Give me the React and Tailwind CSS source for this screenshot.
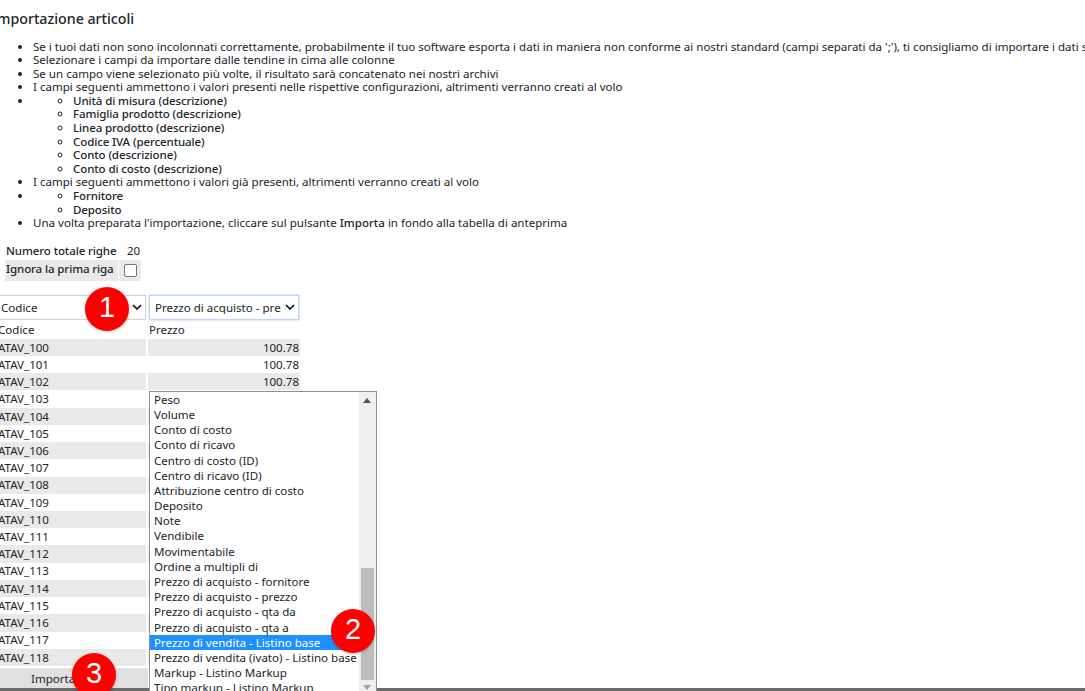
import React from "react";

const rows = ["100","101","102","103","104","105","106","107","108","109","110","111","112","113","114","115","116","117","118"];

const options = [
    "Peso", "Volume", "Conto di costo", "Conto di ricavo", "Centro di costo (ID)", "Centro di ricavo (ID)",
    "Attribuzione centro di costo", "Deposito", "Note", "Vendibile", "Movimentabile", "Ordine a multipli di",
    "Prezzo di acquisto - fornitore", "Prezzo di acquisto - prezzo", "Prezzo di acquisto - qta da", "Prezzo di acquisto - qta a",
    "Prezzo di vendita - Listino base", "Prezzo di vendita (ivato) - Listino base", "Markup - Listino Markup", "Tipo markup - Listino Markup",
];

function Badge({ n, className }) {
    return (
        <div className={"absolute w-[44px] h-[44px] pb-[3px] rounded-full bg-[#fe0000] text-white shadow-[0_1px_3px_rgba(0,0,0,0.25)] flex items-center justify-center text-[29px] font-['Liberation_Sans',sans-serif] " + className}>
            {n}
        </div>
    );
}

function Chevron() {
    return (
        <svg width="10" height="6" viewBox="0 0 10 6" className="shrink-0">
            <path d="M1 1l4 4 4-4" fill="none" stroke="#111" strokeWidth="1.7" />
        </svg>
    );
}

function App() {
    return (
        <div className="relative w-[1085px] h-[691px] overflow-hidden bg-white text-[#212529] text-[11.55px] leading-[13.6px] font-['Noto_Sans',sans-serif]">
            <div className="-ml-[9px] w-[1400px]">
                <h2 className="pt-[11px] pl-[1px] text-[14.2px] leading-[16px] font-medium h-[39.5px]">Importazione articoli</h2>
                <ul className="list-disc pl-[42px]">
                    <li>Se i tuoi dati non sono incolonnati correttamente, probabilmente il tuo software esporta i dati in maniera non conforme ai nostri standard (campi separati da ';'), ti consigliamo di importare i dati secondo lo standard</li>
                    <li>Selezionare i campi da importare dalle tendine in cima alle colonne</li>
                    <li>Se un campo viene selezionato più volte, il risultato sarà concatenato nei nostri archivi</li>
                    <li>I campi seguenti ammettono i valori presenti nelle rispettive configurazioni, altrimenti verranno creati al volo</li>
                    <li>
                        <ul className="list-[circle] pl-[40px] font-medium tracking-[-0.12px]">
                            <li>Unità di misura (descrizione)</li>
                            <li>Famiglia prodotto (descrizione)</li>
                            <li>Linea prodotto (descrizione)</li>
                            <li>Codice IVA (percentuale)</li>
                            <li>Conto (descrizione)</li>
                            <li>Conto di costo (descrizione)</li>
                        </ul>
                    </li>
                    <li>I campi seguenti ammettono i valori già presenti, altrimenti verranno creati al volo</li>
                    <li>
                        <ul className="list-[circle] pl-[40px] font-medium tracking-[-0.12px]">
                            <li>Fornitore</li>
                            <li>Deposito</li>
                        </ul>
                    </li>
                    <li>Una volta preparata l'importazione, cliccare sul pulsante <span className="font-medium">Importa</span> in fondo alla tabella di anteprima</li>
                </ul>

                <div className="mt-[12px] ml-[14px] flex h-[18px] items-center whitespace-nowrap">
                    <span className="w-[117px] pl-[1px] font-medium tracking-[-0.12px]">Numero totale righe</span>
                    <span className="pl-[5px]">20</span>
                </div>
                <div className="ml-[14px] flex gap-[1px] h-[21px] whitespace-nowrap">
                    <span className="w-[113px] bg-[#e9e9e9] pl-[1px] pt-[2px] font-medium tracking-[-0.12px]">Ignora la prima riga</span>
                    <span className="w-[22px] bg-[#e9e9e9] flex items-center justify-center">
                        <input type="checkbox" className="w-[13px] h-[13px] appearance-none bg-white border border-[#767676] rounded-[2px]" />
                    </span>
                </div>

                <div className="mt-[14px] flex gap-[3px] h-[25px]">
                    <div className="w-[155px] h-[25px] bg-white border border-[#d0d0d0] flex items-center justify-between pl-[9px] pr-[3px]">
                        <span>Codice</span>
                        <Chevron />
                    </div>
                    <div className="w-[150px] h-[25px] bg-white border border-[#bcd3f5] shadow-[0_0_2px_#a8c8f8] flex items-center justify-between pl-[5px] pr-[3px]">
                        <span className="w-[126px] overflow-hidden whitespace-nowrap">Prezzo di acquisto - prezzo</span>
                        <Chevron />
                    </div>
                </div>

                <div className="mt-[1px] flex gap-[2px] h-[18px] items-center">
                    <span className="w-[155px] pl-[7px]">Codice</span>
                    <span className="w-[152px] pl-[1px]">Prezzo</span>
                </div>
                {rows.map((r, i) => (
                    <div key={r} className="flex gap-[2px] h-[17.22px]">
                        <span className={"w-[155px] pl-[7px] flex items-center " + (i % 2 === 0 ? "bg-[#e9e9e9]" : "bg-white")}>ATAV_{r}</span>
                        <span className={"w-[152px] text-right flex items-center justify-end pr-[1px] " + (i % 2 === 0 ? "bg-[#e9e9e9]" : "bg-white")}>{i < 3 ? "100.78" : ""}</span>
                    </div>
                ))}
                <div className="mt-[2px] w-[157px] h-[22px] bg-[#e0e0e0] flex items-center pl-[40px]">Importa</div>
            </div>

            <div className="absolute left-0 right-0 bottom-0 h-[3px] bg-[#6b6b6b]"></div>

            <div className="absolute left-[149px] top-[391px] w-[228px] h-[302px] bg-white border border-[#8f8f8f] flex overflow-hidden">
                <div className="flex-1 min-w-0">
                    {options.map((o) => (
                        <div key={o} className={"h-[15.2px] pl-[4px] flex items-center whitespace-nowrap " + (o === "Prezzo di vendita - Listino base" ? "bg-[#1e90ff] text-white" : "")}>{o}</div>
                    ))}
                </div>
                <div className="relative w-[17px] bg-[#efefef]">
                    <svg width="8" height="5" viewBox="0 0 8 5" className="absolute left-[4px] top-[6px]">
                        <path d="M4 0l4 5H0z" fill="#505050" />
                    </svg>
                    <div className="absolute left-[2px] right-[2px] top-[176px] h-[112px] bg-[#bdbdbd]"></div>
                    <svg width="8" height="5" viewBox="0 0 8 5" className="absolute left-[4px] top-[293px]">
                        <path d="M0 0h8L4 5z" fill="#a3a3a3" />
                    </svg>
                </div>
            </div>

            <Badge n="1" className="left-[85px] top-[287px]" />
            <Badge n="2" className="left-[331px] top-[609px]" />
            <Badge n="3" className="left-[72px] top-[653px]" />
        </div>
    );
}

export default App;
